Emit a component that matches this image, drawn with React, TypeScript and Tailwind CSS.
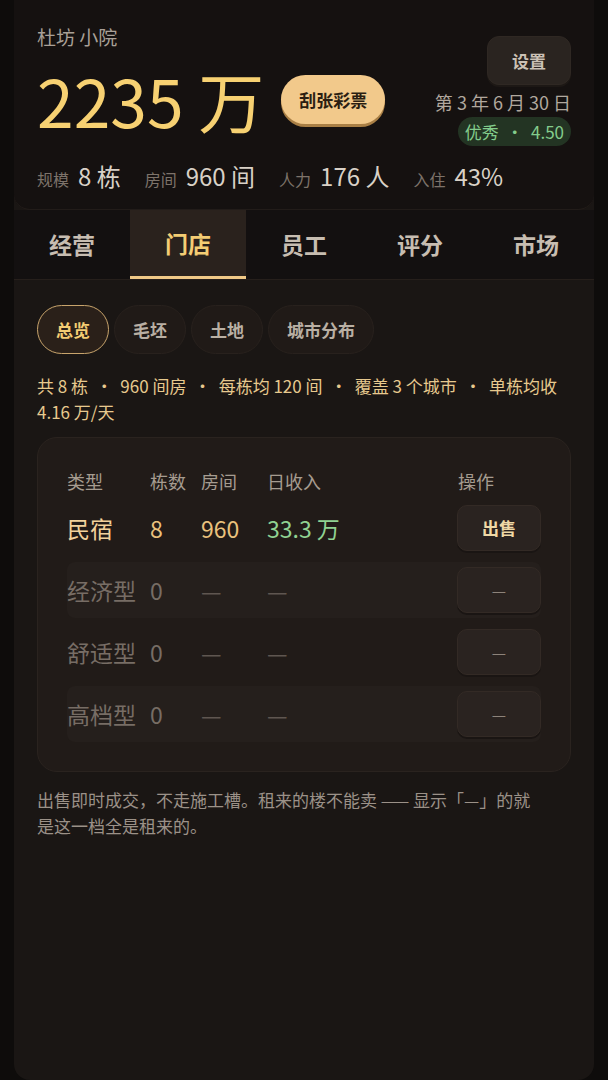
const tabs = ["经营", "门店", "员工", "评分", "市场"];
const pills = ["总览", "毛坯", "土地", "城市分布"];

const rows = [
  { type: "民宿", count: "8", rooms: "960", income: "33.3 万", active: true },
  { type: "经济型", count: "0", rooms: "—", income: "—", active: false },
  { type: "舒适型", count: "0", rooms: "—", income: "—", active: false },
  { type: "高档型", count: "0", rooms: "—", income: "—", active: false },
];

const Stat = ({ label, value }: { label: string; value: string }) => (
  <div className="flex items-baseline gap-[9px]">
    <span className="text-[16px] text-[#7d736a]">{label}</span>
    <span className="text-[24px] leading-[30px] text-[#d9d1c7]">{value}</span>
  </div>
);

export default function App() {
  return (
    <div
      className="min-h-screen bg-[#0e0c0b] px-[14px]"
      style={{ fontFamily: '"Noto Sans CJK SC", "Noto Sans", sans-serif' }}
    >
      <div className="min-h-[1080px] bg-[#1a1614] rounded-b-[16px]">
        {/* header */}
        <div className="bg-[#151110] rounded-b-[16px] border-b border-[#221c19] px-[23px] pt-[24px] pb-[18px]">
          <div className="flex justify-between items-start">
            <div>
              <div className="text-[19px] leading-[26px] text-[#a9a097]">杜坊 小院</div>
              <div className="mt-[16px] flex items-start gap-[17px]">
                <span className="text-[66px] leading-none text-[#f7d172]">2235 万</span>
                <button className="mt-[9px] h-[49px] px-[18px] rounded-full bg-[#f2c98b] text-[17px] font-bold text-[#2b1e12] shadow-[0_3px_0_#a97f45]">
                  刮张彩票
                </button>
              </div>
            </div>
            <div className="flex flex-col items-end">
              <button className="mt-[12px] h-[49px] w-[84px] rounded-[12px] bg-[#2a2420] border border-[#2f2823] text-[17px] font-bold text-[#cbc1b5] shadow-[0_2px_0_#1d1815]">
                设置
              </button>
              <div className="mt-[5px] text-[18px] leading-[24px] text-[#b1a89e]">第 3 年 6 月 30 日</div>
              <div className="mt-[3px] h-[29px] px-[7px] flex items-center rounded-full bg-[#233423] text-[17px] text-[#83cc8c]">
                优秀 &nbsp;·&nbsp; 4.50
              </div>
            </div>
          </div>
          <div className="mt-[15px] flex items-baseline gap-[24px]">
            <Stat label="规模" value="8 栋" />
            <Stat label="房间" value="960 间" />
            <Stat label="人力" value="176 人" />
            <Stat label="入住" value="43%" />
          </div>
        </div>

        {/* tabs */}
        <div className="flex h-[70px] bg-[#131010] border-b border-[#261f1b]">
          {tabs.map((t) => {
            const active = t === "门店";
            return (
              <div
                key={t}
                className={
                  active
                    ? "flex-1 flex items-center justify-center text-[23px] font-bold text-[#f4cd74] bg-[#2a221d] border-b-[3px] border-[#f0c987]"
                    : "flex-1 flex items-center justify-center text-[23px] font-bold text-[#c7bdb1]"
                }
              >
                {t}
              </div>
            );
          })}
        </div>

        {/* content */}
        <div className="px-[23px] pt-[25px]">
          <div className="flex gap-[5px]">
            {pills.map((p) => (
              <div
                key={p}
                className={
                  p === "总览"
                    ? "h-[49px] px-[18px] flex items-center rounded-full border border-[#c8a46c] bg-[#2a2019] text-[17px] font-bold text-[#f4cd74]"
                    : "h-[49px] px-[18px] flex items-center rounded-full border border-[#28211d] bg-[#201a17] text-[17px] font-bold text-[#b9afa3]"
                }
              >
                {p}
              </div>
            ))}
          </div>

          <p className="mt-[19px] text-[17px] leading-[26px] text-[#e7c98e]">
            共 8 栋 &nbsp;·&nbsp; 960 间房 &nbsp;·&nbsp; 每栋均 120 间 &nbsp;·&nbsp; 覆盖 3 个城市 &nbsp;·&nbsp; 单栋均收 4.16 万/天
          </p>

          <div className="mt-[12px] rounded-[20px] bg-[#211b18] border border-[#2a231f] px-[29px] pt-[31px] pb-[29px]">
            <div className="flex text-[18px] leading-[24px] text-[#a69c90]">
              <span className="w-[83px]">类型</span>
              <span className="w-[51px]">栋数</span>
              <span className="w-[66px]">房间</span>
              <span className="flex-1">日收入</span>
              <span className="w-[83px]">操作</span>
            </div>
            <div className="mt-[7px] flex flex-col gap-[6px]">
              {rows.map((r, i) => (
                <div
                  key={r.type}
                  className={
                    i % 2 === 1
                      ? "h-[56px] flex items-center rounded-[8px] bg-[#251f1c]"
                      : "h-[56px] flex items-center"
                  }
                >
                  <span className={r.active ? "w-[83px] text-[23px] text-[#f2d29c]" : "w-[83px] text-[23px] text-[#776d65]"}>
                    {r.type}
                  </span>
                  <span className={r.active ? "w-[51px] text-[23px] text-[#eac27d]" : "w-[51px] text-[23px] text-[#776d65]"}>
                    {r.count}
                  </span>
                  <span className={r.active ? "w-[66px] text-[23px] text-[#eac27d]" : "w-[66px] text-[23px] text-[#5f5650]"}>
                    {r.rooms}
                  </span>
                  <span className={r.active ? "flex-1 text-[23px] text-[#90d292]" : "flex-1 text-[23px] text-[#5f5650]"}>
                    {r.income}
                  </span>
                  <button
                    className={
                      r.active
                        ? "w-[84px] h-[46px] rounded-[10px] bg-[#2a2320] border border-[#332a25] shadow-[0_2px_0_#1a1513] text-[17px] font-bold text-[#f0d9a6]"
                        : "w-[84px] h-[46px] rounded-[10px] bg-[#2a2320] border border-[#332a25] shadow-[0_2px_0_#1a1513] text-[16px] text-[#8d837a]"
                    }
                  >
                    {r.active ? "出售" : "—"}
                  </button>
                </div>
              ))}
            </div>
          </div>

          <p className="mt-[15px] text-[17px] leading-[26px] text-[#9b9188]">
            出售即时成交，不走施工槽。租来的楼不能卖 —— 显示「—」的就
            <br />
            是这一档全是租来的。
          </p>
        </div>
      </div>
    </div>
  );
}
